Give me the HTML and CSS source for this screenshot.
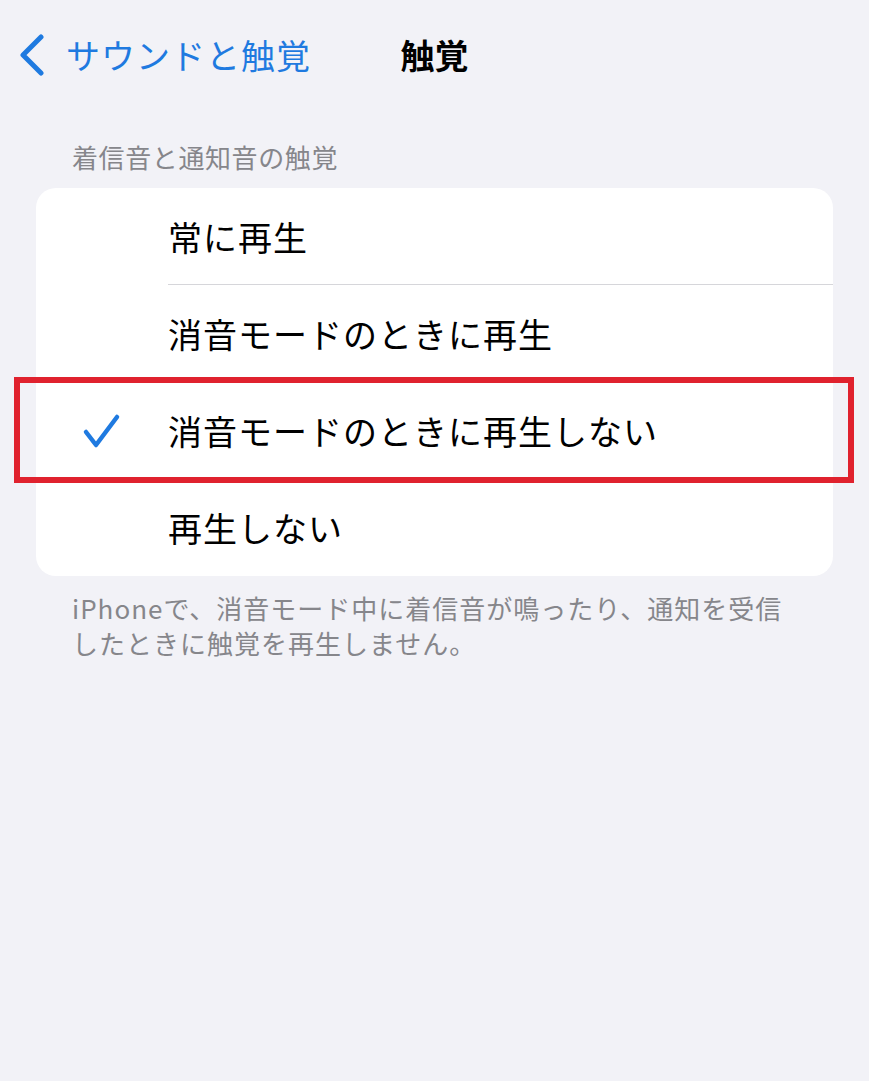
FILE: index.html
```html
<!DOCTYPE html>
<html lang="ja">
<head>
<meta charset="utf-8">
<link rel="stylesheet" href="styles.css">
</head>
<body>
<div class="screen">
  <header class="nav">
    <div class="back">
      <svg class="chev" viewBox="0 0 28 42" width="28" height="42"><polyline points="23,3 5,21 23,39" fill="none" stroke="#1f7ae0" stroke-width="5" stroke-linecap="round" stroke-linejoin="round"/></svg>
      <span class="back-label">サウンドと触覚</span>
    </div>
    <div class="title">触覚</div>
    <div></div>
  </header>

  <div class="section-header">着信音と通知音の触覚</div>
  <div class="card">
    <div class="row"><div class="check"></div><div class="label">常に再生</div></div>
    <div class="row"><div class="check"></div><div class="label">消音モードのときに再生</div></div>
    <div class="row"><div class="check"><svg viewBox="0 0 40 36" width="40" height="36"><polyline points="4,19 14,32 35,4" fill="none" stroke="#1f7ae0" stroke-width="4.5" stroke-linecap="round" stroke-linejoin="round"/></svg></div><div class="label">消音モードのときに再生しない</div></div>
    <div class="row last"><div class="check"></div><div class="label">再生しない</div></div>
  </div>
  <div class="section-footer">iPhoneで、消音モード中に着信音が鳴ったり、通知を受信<br>したときに触覚を再生しません。</div>

  <div class="highlight"></div>
</div>
</body>
</html>
```
FILE: styles.css
```css
html, body {
  margin: 0;
  padding: 0;
  background: #f2f2f7;
}
.screen {
  position: relative;
  width: 869px;
  height: 1081px;
  font-family: "Noto Sans CJK JP", "Noto Sans", sans-serif;
  color: #000;
}
.nav {
  height: 108px;
  display: grid;
  grid-template-columns: 1fr auto 1fr;
  align-items: center;
}
.back {
  display: flex;
  align-items: center;
  padding-left: 18px;
  gap: 20px;
  color: #1f7ae0;
  font-size: 34px;
  letter-spacing: 1px;
  white-space: nowrap;
}
.chev { display: block; margin-top: 2px; }
.title {
  font-size: 34px;
  font-weight: 700;
  text-align: center;
}
.section-header {
  margin-top: 32px;
  padding: 0 72px;
  font-size: 26px;
  letter-spacing: 0.6px;
  line-height: 34px;
  color: #86868b;
}
.card {
  margin: 14px 36px 0;
  background: #fff;
  border-radius: 20px;
  overflow: hidden;
}
.row {
  display: flex;
  height: 97px;
}
.check {
  width: 132px;
  flex: none;
  display: flex;
  align-items: center;
  justify-content: center;
}
.label {
  flex: 1;
  display: flex;
  align-items: center;
  font-size: 34px;
  letter-spacing: 1px;
  border-bottom: 1.5px solid #d6d6da;
  box-sizing: border-box;
}
.row.last .label { border-bottom: none; }
.section-footer {
  margin-top: 14px;
  padding: 0 72px;
  font-size: 26px;
  letter-spacing: 1px;
  line-height: 35px;
  color: #86868b;
  white-space: nowrap;
}
.highlight {
  position: absolute;
  left: 14px;
  top: 377px;
  width: 840px;
  height: 106px;
  box-sizing: border-box;
  border: 6px solid #e0222e;
}
```
